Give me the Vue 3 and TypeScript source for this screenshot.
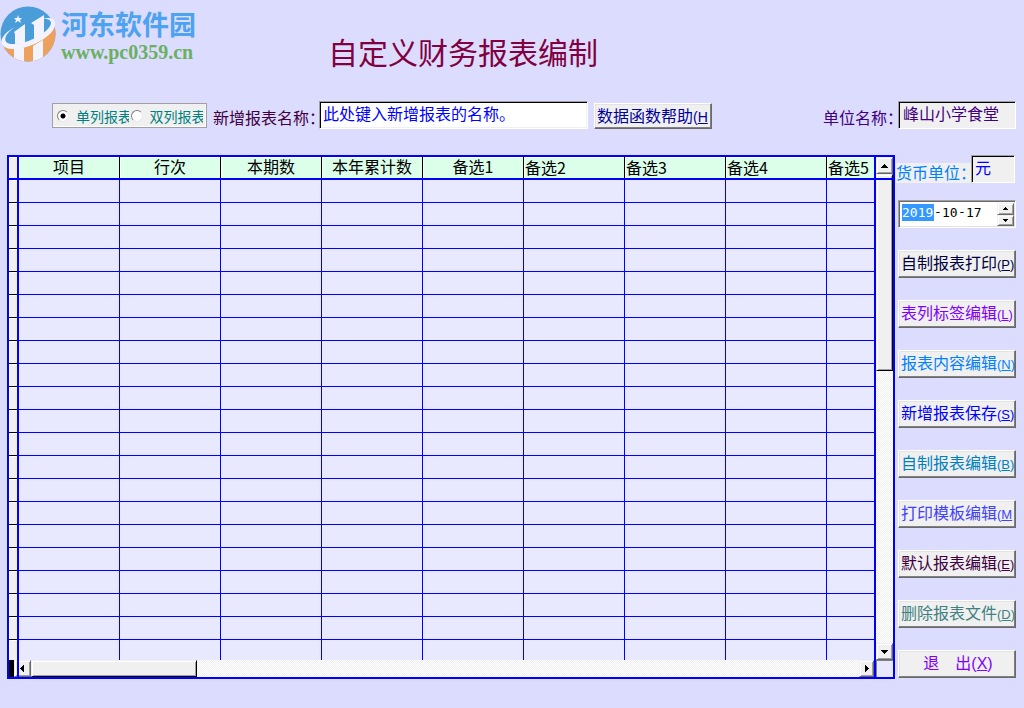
<script setup lang="ts">
import { ref } from 'vue'

interface Column { title: string; centered: boolean }
interface Action { text: string; key: string; close: string; tone: string }

const columns: Column[] = [
  { title: '项目', centered: true },
  { title: '行次', centered: true },
  { title: '本期数', centered: true },
  { title: '本年累计数', centered: true },
  { title: '备选1', centered: true },
  { title: '备选2', centered: false },
  { title: '备选3', centered: false },
  { title: '备选4', centered: false },
  { title: '备选5', centered: false },
]
const rowCount = 21

const actions: Action[] = [
  { text: '自制报表打印', key: 'P', close: ')', tone: 'ink' },
  { text: '表列标签编辑', key: 'L', close: ')', tone: 'violet' },
  { text: '报表内容编辑', key: 'N', close: ')', tone: 'sky' },
  { text: '新增报表保存', key: 'S', close: ')', tone: 'blue' },
  { text: '自制报表编辑', key: 'B', close: ')', tone: 'ocean' },
  { text: '打印模板编辑', key: 'M', close: '', tone: 'indigo' },
  { text: '默认报表编辑', key: 'E', close: ')', tone: 'plum' },
  { text: '删除报表文件', key: 'D', close: ')', tone: 'teal' },
  { text: '退　出', key: 'X', close: ')', tone: 'violet exit' },
]

const layout = ref('single')
const reportName = ref('此处键入新增报表的名称。')
const unitName = ref('峰山小学食堂')
const currency = ref('元')
const year = ref('2019')
const month = ref('10')
const day = ref('17')
</script>

<template>
  <div class="page">
    <header class="top">
      <div class="brand">
        <svg class="emblem" viewBox="0 0 58 58" aria-hidden="true">
          <defs>
            <clipPath id="disc"><circle cx="28" cy="29" r="27.5" /></clipPath>
          </defs>
          <g clip-path="url(#disc)">
            <rect width="58" height="58" fill="#4a9dd9" />
            <path d="M0 38 Q20 48 56 22 V58 H0z" fill="#eea15c" />
            <path d="M14 27 L25 19 V39 H15 V29z M31 18 L44 10 V32 L34 37 V20z" fill="#f3f3ff" />
            <path d="M25 31 L31 28 V36 L25 38z" fill="#4a9dd9" />
            <path d="M14 43 H24 V58 H14z M33 41 L43 35 V58 H33z" fill="#f3f3ff" />
          </g>
          <path d="M15 22 C-2 31 -3 43 12 44 C29 45 54 31 55 20 C56 13 49 12 41 14 C49 13 53 16 50 21 C45 30 26 39 13 39 C1 39 4 29 15 22z" fill="#f3f3ff" />
          <path d="M18 10 l1 3 3 0 -2 2 1 3 -3 -2 -3 2 1 -3 -2 -2 3 0z" fill="#f3f3ff" />
        </svg>
        <div class="brand-text">
          <div class="brand-name">河东软件园</div>
          <div class="brand-url">www.pc0359.cn</div>
        </div>
      </div>
      <h1>自定义财务报表编制</h1>
    </header>

    <form class="toolbar" @submit.prevent>
      <div class="radios" role="radiogroup">
        <label><input v-model="layout" type="radio" name="layout" value="single"><span>单列报表</span></label>
        <label><input v-model="layout" type="radio" name="layout" value="double"><span>双列报表</span></label>
      </div>
      <label class="caption plum" for="report">新增报表名称：</label>
      <input id="report" v-model="reportName" class="field report" type="text">
      <button class="btn help" type="button">数据函数帮助<span class="key">(<u>H</u></span></button>
      <label class="caption unit-label" for="unit">单位名称：</label>
      <input id="unit" v-model="unitName" class="field unit" type="text">
    </form>

    <main class="main">
      <section class="grid">
        <table>
          <colgroup>
            <col class="col-mark">
            <col v-for="n in columns.length - 1" :key="n" class="col-data">
            <col>
          </colgroup>
          <thead>
            <tr>
              <th class="mark"></th>
              <th v-for="c in columns" :key="c.title" :class="{ centered: c.centered }">{{ c.title }}</th>
            </tr>
          </thead>
          <tbody>
            <tr v-for="r in rowCount" :key="r">
              <td class="mark"></td>
              <td v-for="c in columns" :key="c.title"></td>
            </tr>
          </tbody>
        </table>
        <div class="vbar">
          <button class="step" type="button" aria-label="上"><svg viewBox="0 0 7 4"><path d="M3 0h1v1h1v1h1v1h1v1H0V3h1V2h1V1h1z" /></svg></button>
          <div class="thumb"></div>
          <div class="track"></div>
          <button class="step" type="button" aria-label="下"><svg viewBox="0 0 7 4"><path d="M0 0h7v1H6v1H5v1H4v1H3V3H2V2H1V1H0z" /></svg></button>
        </div>
        <div class="hbar">
          <div class="split"></div>
          <button class="step left" type="button" aria-label="左"><svg class="tall" viewBox="0 0 4 7"><path d="M4 0v7H3V6H2V5H1V4H0V3h1V2h1V1h1V0z" /></svg></button>
          <div class="thumb"></div>
          <div class="track"></div>
          <button class="step right" type="button" aria-label="右"><svg class="tall" viewBox="0 0 4 7"><path d="M0 0v7h1V6h1V5h1V4h1V3H3V2H2V1H1V0z" /></svg></button>
        </div>
        <div class="corner"></div>
      </section>

      <aside class="side">
        <div class="currency">
          <label for="currency">货币单位：</label>
          <input id="currency" v-model="currency" class="field" type="text">
        </div>
        <div class="date">
          <input v-model="year" class="year" type="text" aria-label="年"><span>-</span><input v-model="month" type="text" aria-label="月"><span>-</span><input v-model="day" type="text" aria-label="日">
          <div class="spin">
            <button type="button" aria-label="增"><svg viewBox="0 0 5 3"><path d="M2 0h1v1h1v1h1v1H0V2h1V1h1z" /></svg></button>
            <button type="button" aria-label="减"><svg viewBox="0 0 5 3"><path d="M0 0h5v1H4v1H3v1H2V2H1V1H0z" /></svg></button>
          </div>
        </div>
        <button v-for="a in actions" :key="a.key" type="button" class="btn" :class="a.tone">{{ a.text }}<span class="key">(<u>{{ a.key }}</u>{{ a.close }}</span></button>
      </aside>
    </main>
  </div>
</template>

<style>
html { min-height: 100%; background: #dcdcff; }
</style>

<style scoped>
.page {
  font: 16px/20px "Noto Sans CJK SC", sans-serif;
  color: #000;
}
.page * { box-sizing: border-box; }
button, input { font: inherit; color: inherit; margin: 0; border-radius: 0; }

.top { display: flex; height: 101px; }
.brand { display: flex; width: 328px; padding-top: 5px; }
.emblem { width: 58px; height: 58px; flex: none; }
.brand-text { padding: 4px 0 0 3px; }
.brand-name { font-weight: 700; font-size: 27px; line-height: 30px; color: #4da3f0; }
.brand-url { font: 700 20px/26px "Liberation Serif", serif; color: #6ab060; }
h1 { margin: 32px 0 0; font-size: 30px; line-height: 38px; font-weight: 400; color: #800040; }

.toolbar { display: flex; align-items: flex-start; padding: 0 8px 0 52px; margin-bottom: 26px; height: 28px; }
.radios {
  display: flex; width: 155px; height: 25px; margin-top: 2px; padding: 0 2px 0 4px;
  background: #f0f0f0; border: 1px solid #a0a0a0; box-shadow: inset -1px -1px #fff;
  color: #008080; font-size: 14px;
}
.radios label { display: flex; align-items: center; width: 75px; overflow: hidden; white-space: nowrap; }
.radios span { margin-left: 7px; width: 53px; overflow: hidden; }
.radios input {
  appearance: none; flex: none; width: 12px; height: 12px; border-radius: 50%;
  border: 1px solid; border-color: #808080 #e8e8e8 #e8e8e8 #808080; background: #fff;
}
.radios input:checked { background: radial-gradient(circle, #000 2px, #fff 3px); }
.caption { margin: 6px 0 0 6px; width: 106px; white-space: nowrap; }
.unit-label { margin-left: auto; width: 75px; color: #400080; }
.field {
  height: 28px; min-width: 0; padding: 0 2px 4px; outline: 0;
  border: 1px solid; border-color: #a0a0a0 #fff #fff #a0a0a0;
  box-shadow: inset 1px 1px #000, inset -1px -1px #f0f0f0;
  background: #f0f0f0;
}
.report { width: 269px; background: #fff; color: #0000ff; padding-left: 3px; }
.unit { width: 118px; color: #400080; padding-left: 4px; }

.btn {
  display: block; height: 28px; padding: 0 0 2px 2px; text-align: left; white-space: nowrap; overflow: hidden;
  background: #f0f0f0; border: 1px solid; border-color: #fff #696969 #696969 #fff;
  box-shadow: inset -1px -1px #808080, inset 1px 1px #e3e3e3;
}
.key { font-family: "Liberation Sans", sans-serif; font-size: 13px; }
.help { width: 118px; height: 26px; margin: 2px 0 0 6px; padding-bottom: 1px; color: #0000a0; }
.help .key { font-size: 14px; }

.main { display: flex; align-items: flex-start; padding: 0 8px 0 7px; }
.grid {
  position: relative; flex: 1; min-width: 0; border: 2px solid #0000ff;
  display: grid; grid-template-columns: minmax(0, 1fr) 19px; grid-template-rows: auto 17px;
}
.grid::before { content: ""; position: absolute; z-index: 1; left: 0; right: 0; top: 21px; height: 2px; background: #0000ff; }
.grid::after { content: ""; position: absolute; left: 8px; top: 0; bottom: 0; width: 2px; background: #0000ff; }
table { width: 100%; table-layout: fixed; border-collapse: separate; border-spacing: 0; }
.col-mark { width: 10px; }
.col-data { width: 101px; }
th, td { padding: 0; border-right: 1px solid #0000ff; border-bottom: 1px solid #0000ff; background: #e8e8ff; height: 23px; }
th {
  border-right-color: #000; border-bottom: 2px solid #0000ff; background: #dcffea; box-shadow: inset 1px 1px #fff;
  font-weight: 400; line-height: 19px; padding: 1px 0 1px 1px; text-align: left; white-space: nowrap; overflow: hidden;
}
th.centered { text-align: center; padding: 0 0 2px; }
th:last-child, td:last-child { border-right: 0; }
.mark { background: #f0f0f0; border-right: 2px solid #0000ff; border-bottom-color: #000; box-shadow: inset 1px 1px #fff; }
th.mark { border-bottom-color: #0000ff; }
tbody tr:last-child td { height: 20px; border-bottom: 0; }

.vbar { display: flex; flex-direction: column; border-left: 2px solid #0000ff; }
.hbar { display: flex; }
.step, .spin button {
  display: flex; align-items: center; justify-content: center; padding: 0; background: #f0f0f0;
  border: 1px solid; border-color: #f0f0f0 #696969 #696969 #f0f0f0;
  box-shadow: inset 1px 1px #fff, inset -1px -1px #a0a0a0;
}
.step { flex: none; width: 17px; height: 17px; }
.step svg { width: 7px; height: 4px; }
.step svg.tall { width: 4px; height: 7px; }
.left svg.tall { margin-right: 2px; }
.right { width: 15px; }
.split { width: 5px; background: #000; }
.thumb { background: #f0f0f0; border: 1px solid; border-color: #f0f0f0 #000 #000 #f0f0f0; box-shadow: inset 1px 1px #fff, inset -1px -1px #a0a0a0; }
.vbar .thumb { height: 197px; }
.hbar .thumb { width: 166px; }
.track { flex: 1; background: repeating-conic-gradient(#fff 0 25%, #f0f0f0 0 50%) 0 0 / 2px 2px; }
.corner { border-left: 2px solid #0000ff; background: #e8e8ff; box-shadow: inset 1px 1px #808080; }

.side { width: 121px; flex: none; display: grid; grid-template-columns: minmax(0, 1fr); gap: 22px; padding-left: 3px; }
.currency { display: flex; align-items: flex-end; height: 28px; margin: 0 1px 0 -2px; }
.currency label { flex: 1; min-width: 0; height: 20px; line-height: 18px; white-space: nowrap; background: #f0f0f0; color: #0080ff; }
.currency .field { position: relative; flex: none; width: 44px; padding-left: 3px; color: #0000ff; }
.date {
  display: flex; height: 28px; margin-top: -5px; padding: 3px 1px 1px 3px; background: #fff;
  border: 1px solid; border-color: #a0a0a0 #fff #fff #a0a0a0; box-shadow: inset 1px 1px #696969, inset -1px -1px #e3e3e3;
  font: 13px/16px "DejaVu Sans Mono", monospace;
}
.date > span { width: 8px; }
.date > input { width: 16px; height: 17px; padding: 0; border: 0; outline: 0; background: none; }
.date > .year { width: 32px; background: #3399ff; color: #fff; }
.spin { display: grid; width: 17px; margin: -1px 0 0 auto; }
.spin svg { width: 5px; height: 3px; }

.ink { color: #000040; }
.violet { color: #8000ff; }
.sky { color: #0080ff; }
.blue { color: #0000ff; }
.ocean { color: #0080c0; }
.indigo { color: #4040ff; }
.plum { color: #400040; }
.teal { color: #408080; }
.exit { text-align: center; }
.exit .key { font-size: 16px; }
</style>
